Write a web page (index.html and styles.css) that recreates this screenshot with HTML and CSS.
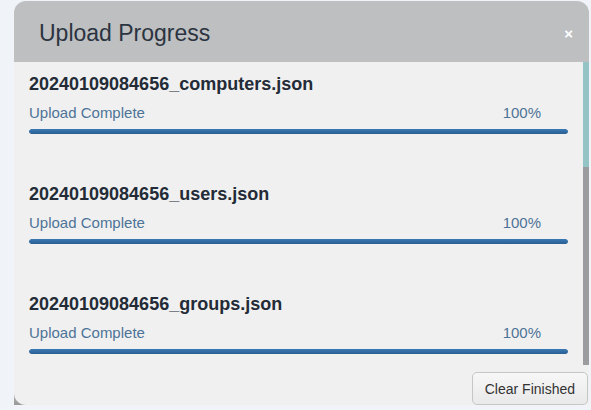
FILE: index.html
```html
<!DOCTYPE html>
<html>
<head>
<meta charset="utf-8">
<link rel="stylesheet" href="styles.css">
</head>
<body>
<div class="modal">
  <div class="header">
    <h1 class="title">Upload Progress</h1>
    <span class="close">×</span>
  </div>
  <div class="content">
    <div class="list">
      <div class="item">
        <div class="filename">20240109084656_computers.json</div>
        <div class="status"><span>Upload Complete</span><span>100%</span></div>
        <div class="bar"><div class="fill" style="width:100%"></div></div>
      </div>
      <div class="item">
        <div class="filename">20240109084656_users.json</div>
        <div class="status"><span>Upload Complete</span><span>100%</span></div>
        <div class="bar"><div class="fill" style="width:100%"></div></div>
      </div>
      <div class="item">
        <div class="filename">20240109084656_groups.json</div>
        <div class="status"><span>Upload Complete</span><span>100%</span></div>
        <div class="bar"><div class="fill" style="width:100%"></div></div>
      </div>
    </div>
    <div class="scrollbar">
      <div class="track-top"></div>
      <div class="thumb"></div>
    </div>
  </div>
  <div class="footer">
    <button class="btn">Clear Finished</button>
  </div>
</div>
</body>
</html>
```
FILE: styles.css
```css
html, body {
  margin: 0;
  padding: 0;
}
body {
  background: #f0f4f9;
  font-family: "Liberation Sans", Arial, sans-serif;
  padding: 1px 2px 0 14px;
  width: 591px;
  height: 410px;
  box-sizing: border-box;
  overflow: hidden;
}
.modal {
  width: 575px;
  height: 404px;
  display: flex;
  flex-direction: column;
  border-radius: 12px 12px 0 0;
  background: linear-gradient(#f0f0f0 90%, #9a9a9a);
  overflow: hidden;
}
.header {
  height: 61px;
  flex: none;
  background: #bebfc1;
  display: flex;
  align-items: center;
  justify-content: space-between;
  padding: 0 16px 0 25px;
  box-sizing: border-box;
}
.title {
  margin: 0;
  font-weight: normal;
  font-size: 23px;
  color: #2b3440;
  line-height: 28px;
  padding-top: 3px;
}
.close {
  color: #ffffff;
  font-weight: bold;
  font-size: 15px;
  line-height: 15px;
  padding-top: 4px;
}
.content {
  height: 303px;
  flex: none;
  display: flex;
  background: #f0f0f0;
}
.list {
  flex: 1;
  padding: 12px 15px 0 15px;
  overflow: hidden;
}
.item {
  margin-bottom: 50px;
}
.filename {
  font-weight: bold;
  font-size: 18px;
  line-height: 20px;
  color: #232b37;
}
.status {
  display: flex;
  justify-content: space-between;
  margin-top: 10px;
  padding-right: 27px;
  font-size: 15px;
  line-height: 18px;
  color: #4d7397;
}
.bar {
  margin-top: 7px;
  height: 5px;
  border-radius: 3px;
  background: #d8d8d8;
  overflow: hidden;
}
.fill {
  height: 100%;
  background: linear-gradient(#3a79b4, #2a5f93);
  border-radius: 3px;
}
.scrollbar {
  width: 6px;
  flex: none;
  display: flex;
  flex-direction: column;
}
.track-top {
  height: 105px;
  background: #94c4c6;
}
.thumb {
  flex: 1;
  background: #9c9ca0;
}
.footer {
  flex: 1;
  display: flex;
  justify-content: flex-end;
  align-items: flex-end;
  padding-right: 1px;
  background: #f0f0f0;
  border-bottom-left-radius: 12px;
}
.btn {
  height: 33px;
  padding: 0 12px;
  font-family: "Liberation Sans", Arial, sans-serif;
  font-size: 14px;
  color: #333333;
  background: linear-gradient(#f7f7f7, #e9e9e9);
  border: 1px solid #c6c6c6;
  border-radius: 5px;
}
```
